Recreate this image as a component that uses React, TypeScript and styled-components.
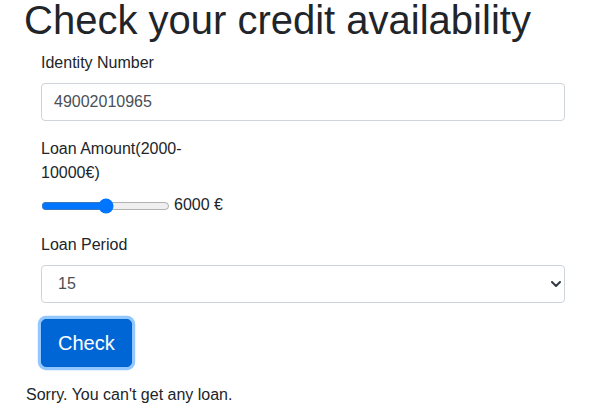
import React, { useState } from "react";
import styled, { createGlobalStyle } from "styled-components";

const GlobalStyle = createGlobalStyle`
  html, body { margin: 0; padding: 0; background: #fff; }
  body {
    font-family: "Liberation Sans", Arial, sans-serif;
    font-size: 16px;
    line-height: 1.5;
    color: #212529;
    overflow: hidden;
  }
  * { box-sizing: border-box; }
`;

const Page = styled.div`
  padding: 0 40px 0 26px;
`;

const Title = styled.h1`
  font-size: 40px;
  font-weight: 500;
  line-height: 1.2;
  margin: -4px 0 7px -2px;
`;

const Form = styled.form`
  padding-left: 15px;
`;

const Group = styled.div`
  margin-bottom: 16px;
`;

const Label = styled.label<{ $narrow?: boolean }>`
  display: block;
  margin-bottom: 8px;
  max-width: ${(p) => (p.$narrow ? "150px" : "none")};
`;

const TextInput = styled.input`
  display: block;
  width: 100%;
  height: 38px;
  padding: 6px 12px;
  font: inherit;
  color: #495057;
  background: #fff;
  border: 1px solid #ced4da;
  border-radius: 4px;
  outline: none;
`;

const RangeRow = styled.div`
  display: flex;
  align-items: center;
  height: 24px;
`;

const Range = styled.input`
  width: 129px;
  margin: 2px 4px 0 0;
  accent-color: #0075ff;
`;

const SelectWrap = styled.div`
  position: relative;
`;

const Select = styled.select`
  display: block;
  width: 100%;
  height: 38px;
  padding: 6px 36px 6px 16px;
  font: inherit;
  color: #495057;
  background: #fff;
  border: 1px solid #ced4da;
  border-radius: 4px;
  appearance: none;
  -webkit-appearance: none;
  outline: none;
`;

const Chevron = styled.svg`
  position: absolute;
  right: 4px;
  top: 16px;
  width: 10px;
  height: 6px;
  pointer-events: none;
`;

const Button = styled.button`
  display: inline-block;
  font: inherit;
  font-size: 20px;
  line-height: 1.5;
  padding: 8px 16px;
  color: #fff;
  background: #0066d6;
  border: 1px solid #0062cc;
  border-radius: 5px;
  box-shadow: 0 0 0 3.2px rgba(38, 143, 255, 0.5);
  margin-bottom: 16px;
  cursor: pointer;
`;

const Result = styled.p`
  margin: 0;
`;

export default function App() {
  const [amount, setAmount] = useState(6000);
  return (
    <>
      <GlobalStyle />
      <Page>
        <Title>Check your credit availability</Title>
        <Form onSubmit={(e) => e.preventDefault()}>
          <Group>
            <Label>Identity Number</Label>
            <TextInput type="text" defaultValue="49002010965" />
          </Group>
          <Group>
            <Label $narrow>Loan Amount(2000-10000€)</Label>
            <RangeRow>
              <Range
                type="range"
                min={2000}
                max={10000}
                step={100}
                value={amount}
                onChange={(e) => setAmount(Number(e.target.value))}
              />
              <span>{amount} €</span>
            </RangeRow>
          </Group>
          <Group>
            <Label>Loan Period</Label>
            <SelectWrap>
              <Select defaultValue="15">
                <option value="12">12</option>
                <option value="15">15</option>
                <option value="24">24</option>
              </Select>
              <Chevron viewBox="0 0 10 6">
                <path
                  d="M1 1l4 4 4-4"
                  fill="none"
                  stroke="#343a40"
                  strokeWidth="2"
                  strokeLinecap="round"
                  strokeLinejoin="round"
                />
              </Chevron>
            </SelectWrap>
          </Group>
          <Button type="submit">Check</Button>
        </Form>
        <Result>Sorry. You can't get any loan.</Result>
      </Page>
    </>
  );
}
